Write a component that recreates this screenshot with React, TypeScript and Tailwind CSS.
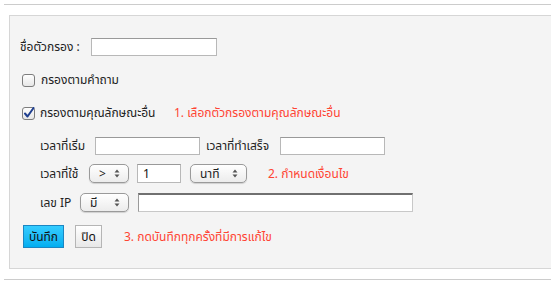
import React from "react";

const font = { fontFamily: "Tahoma, 'Noto Sans Thai', 'Noto Sans', 'DejaVu Sans', sans-serif" };

function Arrows() {
  return (
    <svg width="6" height="9" viewBox="0 0 6 9" className="shrink-0">
      <path d="M3 0.5 L5.5 3.5 H0.5 Z" fill="#555" />
      <path d="M3 8.5 L5.5 5.5 H0.5 Z" fill="#555" />
    </svg>
  );
}

function Select({ label, w }: { label: string; w: string }) {
  return (
    <div
      className={`${w} h-[19px] flex items-center justify-between pl-[9px] pr-[8px] rounded-[5px] border border-[#9a9a9a] bg-gradient-to-b from-white to-[#ececec] text-[12px] text-[#222] shadow-[0_1px_1px_rgba(0,0,0,0.15)]`}
    >
      <span className="leading-none">{label}</span>
      <Arrows />
    </div>
  );
}

function Input({ w, value, h = "h-[18px]", dark = false }: { w: string; value?: string; h?: string; dark?: boolean }) {
  return (
    <div
      className={`${w} ${h} bg-white border ${dark ? "border-[#c8c8c8] border-t-[#707070] border-l-[#9a9a9a] border-t-2" : "border-[#b8b8b8] border-t-[#999]"} flex items-center pl-[5px] text-[12px] text-[#111]`}
    >
      {value}
    </div>
  );
}

function Checkbox({ checked }: { checked?: boolean }) {
  return (
    <svg width="13" height="13" viewBox="0 0 13 13" className="shrink-0">
      <defs>
        <linearGradient id={checked ? "gc" : "gu"} x1="0" y1="0" x2="0" y2="1">
          <stop offset="0" stopColor="#ffffff" />
          <stop offset="1" stopColor="#e6e6e6" />
        </linearGradient>
      </defs>
      <rect x="0.5" y="0.5" width="12" height="12" rx="2.5" fill={`url(#${checked ? "gc" : "gu"})`} stroke="#7d7d7d" />
      {checked && (
        <path d="M3 6.5 L5.5 9.5 L11.5 1" fill="none" stroke="#1f3f8f" strokeWidth="2" strokeLinecap="round" strokeLinejoin="round" />
      )}
    </svg>
  );
}

export default function App() {
  return (
    <div className="w-[551px] h-[300px] bg-white overflow-hidden text-[12px] text-[#222]" style={font}>
      <div className="mt-[4px] ml-[4px] h-px bg-[#cccccc]" />
      <div className="mt-[10px] ml-[9px] border-l border-t border-b border-[#d6d6d6] bg-[#f4f4f4] pl-[10px] pt-[22px] pb-[20px]">
        <div className="flex items-center h-[18px]">
          <span className="w-[63px] whitespace-nowrap">ชื่อตัวกรอง :</span>
          <div className="ml-[8px]">
            <Input w="w-[126px]" />
          </div>
        </div>

        <div className="flex items-center h-[18px] mt-[15px] pl-[2px]">
          <Checkbox />
          <span className="ml-[6px]">กรองตามคำถาม</span>
        </div>

        <div className="flex items-center h-[18px] mt-[15px] pl-[2px]">
          <Checkbox checked />
          <span className="ml-[5px] w-[117px] whitespace-nowrap">กรองตามคุณลักษณะอื่น</span>
          <span className="ml-[17px] text-[#ff4433]">1. เลือกตัวกรองตามคุณลักษณะอื่น</span>
        </div>

        <div className="flex items-center h-[18px] mt-[15px] pl-[20px]">
          <span className="w-[49px] whitespace-nowrap">เวลาที่เริ่ม</span>
          <div className="ml-[6px]">
            <Input w="w-[105px]" />
          </div>
          <span className="ml-[6px] w-[69px] whitespace-nowrap">เวลาที่ทำเสร็จ</span>
          <div className="ml-[5px]">
            <Input w="w-[105px]" />
          </div>
        </div>

        <div className="flex items-center h-[19px] mt-[9px] pl-[20px]">
          <span className="w-[45px] whitespace-nowrap">เวลาที่ใช้</span>
          <div className="ml-[4px]">
            <Select label=">" w="w-[40px]" />
          </div>
          <div className="ml-[8px]">
            <Input w="w-[44px]" h="h-[19px]" value="1" />
          </div>
          <div className="ml-[9px]">
            <Select label="นาที" w="w-[57px]" />
          </div>
          <span className="ml-[21px] text-[#ff4433]">2. กำหนดเงื่อนไข</span>
        </div>

        <div className="flex items-center h-[19px] mt-[10px] pl-[20px]">
          <span className="w-[35px] whitespace-nowrap">เลข IP</span>
          <div className="ml-[5px]">
            <Select label="มี" w="w-[49px]" />
          </div>
          <div className="ml-[9px]">
            <Input w="w-[275px]" h="h-[19px]" dark />
          </div>
        </div>

        <div className="flex items-center h-[23px] mt-[13px] pl-[3px]">
          <button className="h-[23px] w-[41px] border border-[#1b86c2] bg-gradient-to-b from-[#33ccff] to-[#00aef0] text-[12px] text-[#111] flex items-center justify-center">
            บันทึก
          </button>
          <button className="ml-[11px] h-[23px] w-[27px] border border-[#b5b5b5] bg-gradient-to-b from-white to-[#e8e8e8] text-[12px] text-[#111] flex items-center justify-center">
            ปิด
          </button>
          <span className="ml-[22px] text-[#ff4433]">3. กดบันทึกทุกครั้งที่มีการแก้ไข</span>
        </div>
      </div>
      <div className="mt-[10px] ml-[4px] h-px bg-[#cccccc]" />
    </div>
  );
}
